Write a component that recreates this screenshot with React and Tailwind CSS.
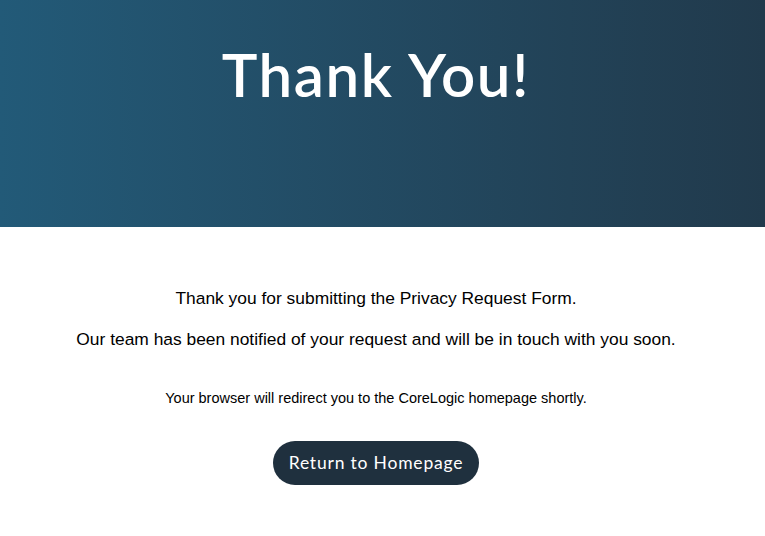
export default function App() {
  return (
    <div className="min-h-[536px] bg-white">
      <header className="h-[227px] bg-gradient-to-r from-[#225a78] to-[#213a4c] flex justify-center pr-[13px]">
        <h1
          className="mt-[38px] text-[60px] leading-[72px] font-semibold text-white tracking-[1.6px]"
          style={{ fontFamily: 'Lato, Inter, sans-serif' }}
        >
          Thank You!
        </h1>
      </header>

      <main
        className="flex flex-col items-center text-black text-center pr-[13px]"
        style={{ fontFamily: '"Liberation Sans", Arial, sans-serif' }}
      >
        <p className="mt-[61px] text-[17.4px] leading-[20px]">
          Thank you for submitting the Privacy Request Form.
        </p>
        <p className="mt-[21px] text-[17.4px] leading-[20px]">
          Our team has been notified of your request and will be in touch with you soon.
        </p>
        <p className="mt-[41px] text-[14.5px] leading-[16px]">
          Your browser will redirect you to the CoreLogic homepage shortly.
        </p>
        <button
          className="mt-[35px] h-[44px] w-[206px] rounded-full bg-[#1f303e] text-white text-[17.5px] tracking-[0.8px]"
          style={{ fontFamily: 'Lato, Inter, sans-serif' }}
        >
          Return to Homepage
        </button>
      </main>
    </div>
  )
}
